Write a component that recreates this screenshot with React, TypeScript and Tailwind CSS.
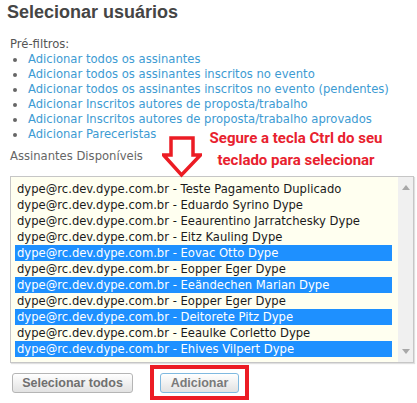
import React from "react";

const links = [
  "Adicionar todos os assinantes",
  "Adicionar todos os assinantes inscritos no evento",
  "Adicionar todos os assinantes inscritos no evento (pendentes)",
  "Adicionar Inscritos autores de proposta/trabalho",
  "Adicionar Inscritos autores de proposta/trabalho aprovados",
  "Adicionar Pareceristas",
];

const rows: { name: string; sel: boolean }[] = [
  { name: "Teste Pagamento Duplicado", sel: false },
  { name: "Eduardo Syrino Dype", sel: false },
  { name: "Eeaurentino Jarratchesky Dype", sel: false },
  { name: "Eitz Kauling Dype", sel: false },
  { name: "Eovac Otto Dype", sel: true },
  { name: "Eopper Eger Dype", sel: false },
  { name: "Eeändechen Marian Dype", sel: true },
  { name: "Eopper Eger Dype", sel: false },
  { name: "Deitorete Pitz Dype", sel: true },
  { name: "Eeaulke Corletto Dype", sel: false },
  { name: "Ehives Vilpert Dype", sel: true },
];

export default function App() {
  return (
    <div className="relative w-[417px] h-[403px] bg-white overflow-hidden font-['DejaVu_Sans',sans-serif] text-[11.6px]">
      <h1 className="px-[7px] h-[24px] leading-[24px] text-[18px] font-bold text-[#454545] font-['Liberation_Sans',Arial,sans-serif]">
        Selecionar usuários
      </h1>

      <div className="pl-[10px] mt-[13px] leading-[15px]">
        <div className="text-[#555]">Pré-filtros:</div>
        <ul>
          {links.map((l) => (
            <li key={l} className="flex items-center h-[15px]">
              <span className="ml-[3px] w-[4px] h-[4px] rounded-full bg-[#666]" />
              <span className="ml-[11px] text-[#3d9bd3]">{l}</span>
            </li>
          ))}
        </ul>
        <div className="mt-[7px] text-[#666]">Assinantes Disponíveis</div>
      </div>

      <div className="ml-[10px] mt-[12px] w-[404px] h-[187px] border border-[#c6c6c6] shadow-[1px_1px_1px_rgba(0,0,0,0.12)] flex bg-[#fffff0]">
        <div className="w-[387px] pt-[4px] pl-[4px] pr-[6px]">
          {rows.map((r, i) => (
            <div
              key={i}
              className={
                r.sel
                  ? "h-[16px] leading-[16px] pl-[2px] whitespace-nowrap bg-[#1e90ff] text-white"
                  : "h-[16px] leading-[16px] pl-[2px] whitespace-nowrap text-[#1a1a1a]"
              }
            >
              dype@rc.dev.dype.com.br - {r.name}
            </div>
          ))}
        </div>
        <div className="w-[15px] bg-[#f0f0f0] flex flex-col items-center justify-between py-[8px]">
          <svg width="8" height="5" viewBox="0 0 8 5">
            <polygon points="0,5 8,5 4,0" fill="#a8a8a8" />
          </svg>
          <svg width="8" height="5" viewBox="0 0 8 5">
            <polygon points="0,0 8,0 4,5" fill="#a8a8a8" />
          </svg>
        </div>
      </div>

      <div className="flex items-start ml-[12px] font-['Liberation_Sans',Arial,sans-serif]">
        <button className="mt-[10px] w-[121px] h-[20px] rounded-[3px] border border-[#b5b5b5] bg-gradient-to-b from-white to-[#e2e2e2] text-[12.5px] font-bold text-[#707070] leading-[18px]">
          Selecionar todos
        </button>
        <div className="ml-[17px] mt-[2px] border-4 border-[#ec1c24] pl-[6px] pr-[6px] pt-[4px] pb-[3px]">
          <button className="block w-[79px] h-[20px] rounded-[3px] border border-[#7fb9e0] bg-gradient-to-b from-white to-[#e2e2e2] text-[12.5px] font-bold text-[#7a7a7a] leading-[18px]">
            Adicionar
          </button>
        </div>
      </div>

      <svg
        className="absolute left-[162px] top-[136px]"
        width="40"
        height="42"
        viewBox="0 0 40 42"
      >
        <polygon
          points="9,2 31,2 31,19 38.5,19 19.5,39 1.5,19 9,19"
          fill="white"
          stroke="#ec1c24"
          strokeWidth="3.5"
          strokeLinejoin="miter"
        />
      </svg>

      <div className="absolute left-[196px] top-[127px] w-[200px] text-center text-[15px] leading-[22px] font-bold text-[#e8212e] font-['Roboto',sans-serif]">
        <div>Segure a tecla Ctrl do seu</div>
        <div>teclado para selecionar</div>
      </div>
    </div>
  );
}
